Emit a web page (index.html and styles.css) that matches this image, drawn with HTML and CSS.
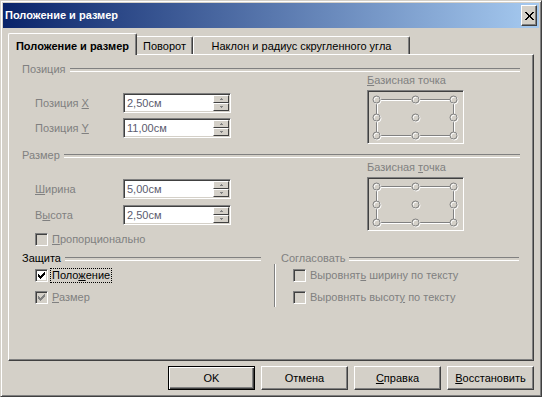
FILE: index.html
```html
<!DOCTYPE html>
<html lang="ru">
<head>
<meta charset="utf-8">
<title>Положение и размер</title>
<link rel="stylesheet" href="styles.css">
</head>
<body>
<div class="window">
  <div class="titlebar">
    <span class="title">Положение и размер</span>
    <span class="close"><svg width="9" height="8" viewBox="0 0 9 8" shape-rendering="crispEdges"><path fill="#000" d="M0 0h2v1h-2zM7 0h2v1h-2zM1 1h2v1h-2zM6 1h2v1h-2zM2 2h2v1h-2zM5 2h2v1h-2zM3 3h3v1h-3zM3 4h3v1h-3zM2 5h2v1h-2zM5 5h2v1h-2zM1 6h2v1h-2zM6 6h2v1h-2zM0 7h2v1h-2zM7 7h2v1h-2z"/></svg></span>
  </div>
  <div class="content">
    <div class="tabs">
      <div class="tab tab-active">Положение и размер</div>
      <div class="tab tab-rot">Поворот</div>
      <div class="tab tab-slant">Наклон и радиус скругленного угла</div>
    </div>
    <div class="panel">
      <div class="group-head"><span>Позиция</span></div>
      <div class="sec">
        <div class="fields">
          <div class="field-row"><span class="lbl">Позиция <u>X</u></span><div class="spin"><span class="val">2,50см</span><span class="spin-btns"><span class="sb"><svg width="3" height="2" viewBox="0 0 3 2" shape-rendering="crispEdges"><path fill="#808080" d="M1 0h1v1h-1zM0 1h3v1h-3z"/></svg></span><span class="sb"><svg width="3" height="2" viewBox="0 0 3 2" shape-rendering="crispEdges"><path fill="#808080" d="M0 0h3v1h-3zM1 1h1v1h-1z"/></svg></span></span></div></div>
          <div class="field-row"><span class="lbl">Позиция <u>Y</u></span><div class="spin"><span class="val">11,00см</span><span class="spin-btns"><span class="sb"><svg width="3" height="2" viewBox="0 0 3 2" shape-rendering="crispEdges"><path fill="#808080" d="M1 0h1v1h-1zM0 1h3v1h-3z"/></svg></span><span class="sb"><svg width="3" height="2" viewBox="0 0 3 2" shape-rendering="crispEdges"><path fill="#808080" d="M0 0h3v1h-3zM1 1h1v1h-1z"/></svg></span></span></div></div>
        </div>
        <div class="basis">
          <div class="basis-lbl"><u>Б</u>азисная точка</div>
          <div class="basis-box">
            <svg width="93" height="50" viewBox="0 0 93 50" shape-rendering="crispEdges">
              <g fill="#fff"><rect x="12" y="8" width="30" height="1"/><rect x="51" y="8" width="30" height="1"/><rect x="12" y="44" width="30" height="1"/><rect x="51" y="44" width="30" height="1"/><rect x="8" y="12" width="1" height="10"/><rect x="8" y="30" width="1" height="10"/><rect x="85" y="12" width="1" height="10"/><rect x="85" y="30" width="1" height="10"/></g>
              <g fill="#808080"><rect x="12" y="7" width="30" height="1"/><rect x="51" y="7" width="30" height="1"/><rect x="12" y="43" width="30" height="1"/><rect x="51" y="43" width="30" height="1"/><rect x="7" y="12" width="1" height="10"/><rect x="7" y="30" width="1" height="10"/><rect x="84" y="12" width="1" height="10"/><rect x="84" y="30" width="1" height="10"/></g>
              <g fill="none" stroke="#fff" stroke-width="1" shape-rendering="auto"><circle cx="8.5" cy="8.5" r="3.5"/><circle cx="47.5" cy="8.5" r="3.5"/><circle cx="85.5" cy="8.5" r="3.5"/><circle cx="8.5" cy="26.5" r="3.5"/><circle cx="47.5" cy="26.5" r="3.5"/><circle cx="85.5" cy="26.5" r="3.5"/><circle cx="8.5" cy="44.5" r="3.5"/><circle cx="47.5" cy="44.5" r="3.5"/><circle cx="85.5" cy="44.5" r="3.5"/></g>
              <g fill="none" stroke="#808080" stroke-width="1" shape-rendering="auto"><circle cx="7.5" cy="7.5" r="3.5"/><circle cx="46.5" cy="7.5" r="3.5"/><circle cx="84.5" cy="7.5" r="3.5"/><circle cx="7.5" cy="25.5" r="3.5"/><circle cx="46.5" cy="25.5" r="3.5"/><circle cx="84.5" cy="25.5" r="3.5"/><circle cx="7.5" cy="43.5" r="3.5"/><circle cx="46.5" cy="43.5" r="3.5"/><circle cx="84.5" cy="43.5" r="3.5"/></g>
            </svg>
          </div>
        </div>
      </div>

      <div class="group-head head2"><span>Размер</span></div>
      <div class="sec sec2">
        <div class="fields">
          <div class="field-row"><span class="lbl"><u>Ш</u>ирина</span><div class="spin"><span class="val">5,00см</span><span class="spin-btns"><span class="sb"><svg width="3" height="2" viewBox="0 0 3 2" shape-rendering="crispEdges"><path fill="#808080" d="M1 0h1v1h-1zM0 1h3v1h-3z"/></svg></span><span class="sb"><svg width="3" height="2" viewBox="0 0 3 2" shape-rendering="crispEdges"><path fill="#808080" d="M0 0h3v1h-3zM1 1h1v1h-1z"/></svg></span></span></div></div>
          <div class="field-row"><span class="lbl">В<u>ы</u>сота</span><div class="spin"><span class="val">2,50см</span><span class="spin-btns"><span class="sb"><svg width="3" height="2" viewBox="0 0 3 2" shape-rendering="crispEdges"><path fill="#808080" d="M1 0h1v1h-1zM0 1h3v1h-3z"/></svg></span><span class="sb"><svg width="3" height="2" viewBox="0 0 3 2" shape-rendering="crispEdges"><path fill="#808080" d="M0 0h3v1h-3zM1 1h1v1h-1z"/></svg></span></span></div></div>
          <div class="cb-row prop"><span class="cb dis"></span><span class="cb-lbl dim"><u>П</u>ропорционально</span></div>
        </div>
        <div class="basis basis2">
          <div class="basis-lbl">Базисная <u>т</u>очка</div>
          <div class="basis-box">
            <svg width="93" height="50" viewBox="0 0 93 50" shape-rendering="crispEdges">
              <g fill="#fff"><rect x="12" y="8" width="30" height="1"/><rect x="51" y="8" width="30" height="1"/><rect x="12" y="44" width="30" height="1"/><rect x="51" y="44" width="30" height="1"/><rect x="8" y="12" width="1" height="10"/><rect x="8" y="30" width="1" height="10"/><rect x="85" y="12" width="1" height="10"/><rect x="85" y="30" width="1" height="10"/></g>
              <g fill="#808080"><rect x="12" y="7" width="30" height="1"/><rect x="51" y="7" width="30" height="1"/><rect x="12" y="43" width="30" height="1"/><rect x="51" y="43" width="30" height="1"/><rect x="7" y="12" width="1" height="10"/><rect x="7" y="30" width="1" height="10"/><rect x="84" y="12" width="1" height="10"/><rect x="84" y="30" width="1" height="10"/></g>
              <g fill="none" stroke="#fff" stroke-width="1" shape-rendering="auto"><circle cx="8.5" cy="8.5" r="3.5"/><circle cx="47.5" cy="8.5" r="3.5"/><circle cx="85.5" cy="8.5" r="3.5"/><circle cx="8.5" cy="26.5" r="3.5"/><circle cx="47.5" cy="26.5" r="3.5"/><circle cx="85.5" cy="26.5" r="3.5"/><circle cx="8.5" cy="44.5" r="3.5"/><circle cx="47.5" cy="44.5" r="3.5"/><circle cx="85.5" cy="44.5" r="3.5"/></g>
              <g fill="none" stroke="#808080" stroke-width="1" shape-rendering="auto"><circle cx="7.5" cy="7.5" r="3.5"/><circle cx="46.5" cy="7.5" r="3.5"/><circle cx="84.5" cy="7.5" r="3.5"/><circle cx="7.5" cy="25.5" r="3.5"/><circle cx="46.5" cy="25.5" r="3.5"/><circle cx="84.5" cy="25.5" r="3.5"/><circle cx="7.5" cy="43.5" r="3.5"/><circle cx="46.5" cy="43.5" r="3.5"/><circle cx="84.5" cy="43.5" r="3.5"/></g>
            </svg>
          </div>
        </div>
      </div>

      <div class="bottom">
        <div class="prot">
          <div class="group-head active-head"><span>Защита</span></div>
          <div class="cb-row first"><span class="cb"><svg width="7" height="7" viewBox="0 0 7 7" shape-rendering="crispEdges"><path fill="#000" d="M6 0h1v1h-1zM5 1h2v1h-2zM0 2h1v1h-1zM4 2h3v1h-3zM0 3h2v1h-2zM3 3h3v1h-3zM0 4h5v1h-5zM1 5h3v1h-3zM2 6h1v1h-1z"/></svg></span><span class="cb-lbl focus">Поло<u>ж</u>ение</span></div>
          <div class="cb-row second"><span class="cb dis"><svg width="7" height="7" viewBox="0 0 7 7" shape-rendering="crispEdges"><path fill="#808080" d="M6 0h1v1h-1zM5 1h2v1h-2zM0 2h1v1h-1zM4 2h3v1h-3zM0 3h2v1h-2zM3 3h3v1h-3zM0 4h5v1h-5zM1 5h3v1h-3zM2 6h1v1h-1z"/></svg></span><span class="cb-lbl dim"><u>Р</u>азмер</span></div>
        </div>
        <div class="sep"></div>
        <div class="align">
          <div class="group-head"><span>Согласовать</span></div>
          <div class="cb-row first"><span class="cb dis"></span><span class="cb-lbl dim">Выровнят<u>ь</u> ширину по тексту</span></div>
          <div class="cb-row second"><span class="cb dis"></span><span class="cb-lbl dim">Выровнять высот<u>у</u> по тексту</span></div>
        </div>
      </div>
    </div>
    <div class="buttons">
      <div class="btn default">OK</div>
      <div class="btn">Отмена</div>
      <div class="btn"><span><u>С</u>правка</span></div>
      <div class="btn"><span><u>В</u>осстановить</span></div>
    </div>
  </div>
</div>
</body>
</html>
```

FILE: styles.css
```css
* { box-sizing: border-box; }
html, body { margin: 0; padding: 0; background: #d4d0c8; }
body {
  font-family: "Liberation Sans", Arial, sans-serif;
  font-size: 11px;
  line-height: 13px;
  color: #000;
}
u { text-decoration: underline; text-underline-offset: 1px; }

.window {
  width: 542px;
  height: 397px;
  background: #d4d0c8;
  border: 1px solid;
  border-color: #d4d0c8 #404040 #404040 #d4d0c8;
  box-shadow: inset 1px 1px #fff, inset -1px -1px #808080;
  padding: 2px;
  display: flex;
  flex-direction: column;
}

.titlebar {
  height: 25px;
  background: linear-gradient(to right, #0a246a, #a6caf0);
  display: flex;
  align-items: center;
  justify-content: space-between;
  padding: 0 2px;
}
.title { color: #fff; font-weight: bold; padding-left: 0; }
.close {
  width: 16px;
  height: 21px;
  background: #d4d0c8;
  border: 1px solid;
  border-color: #fff #404040 #404040 #fff;
  box-shadow: inset -1px -1px #808080;
  display: flex;
  align-items: center;
  justify-content: center;
}

.content {
  flex: 1;
  padding: 5px 5px 0 5px;
  display: flex;
  flex-direction: column;
}

.tabs {
  display: flex;
  align-items: flex-end;
  height: 21px;
}
.tab {
  height: 18px;
  background: #d4d0c8;
  border-top: 1px solid #fff;
  border-left: 1px solid #fff;
  border-right: 1px solid #404040;
  box-shadow: inset -1px 0 #808080;
  border-radius: 2px 2px 0 0;
  display: flex;
  justify-content: center;
  padding-top: 3px;
  white-space: nowrap;
}
.tab-active {
  width: 129px;
  height: 22px;
  margin-bottom: -1px;
  padding-top: 6px;
  font-weight: bold;
  position: relative;
  z-index: 2;
}
.tab-rot { width: 56px; border-left: none; border-top-left-radius: 0; }
.tab-slant { width: 217px; }

.panel {
  height: 307px;
  border: 1px solid;
  border-color: #fff #404040 #404040 #fff;
  box-shadow: inset -1px -1px #808080;
  padding: 8px 13px 0 13px;
}

.group-head {
  display: flex;
  align-items: center;
  height: 13px;
  color: #808080;
  white-space: nowrap;
}
.group-head::after {
  content: "";
  flex: 1;
  height: 2px;
  border-top: 1px solid #808080;
  border-bottom: 1px solid #fff;
  margin-left: 4px;
}
.active-head { color: #000; }
.head2 { margin-top: 5px; }

.sec { display: flex; }
.fields {
  width: 345px;
  padding-top: 17px;
  display: flex;
  flex-direction: column;
  gap: 5px;
}
.sec2 .fields { gap: 6px; }

.field-row {
  display: flex;
  align-items: center;
  height: 20px;
  padding-left: 13px;
}
.lbl { width: 88px; color: #808080; }

.spin {
  width: 108px;
  height: 20px;
  background: #fff;
  border: 1px solid;
  border-color: #808080 #fff #fff #808080;
  box-shadow: inset 1px 1px #404040, inset -1px -1px #d4d0c8;
  padding: 1px 1px 1px 3px;
  display: flex;
  align-items: center;
}
.val { color: #5b5b6e; flex: 1; }
.spin-btns {
  width: 16px;
  height: 16px;
  display: flex;
  flex-direction: column;
}
.sb {
  height: 8px;
  background: #d4d0c8;
  border: 1px solid;
  border-color: #fff #404040 #404040 #fff;
  display: flex;
  align-items: center;
  justify-content: center;
}

.basis { display: flex; flex-direction: column; }
.basis-lbl { line-height: 12px; margin-top: -2px; color: #808080; }
.basis2 .basis-lbl { margin-top: -1px; }
.basis-box {
  width: 97px;
  height: 54px;
  margin-top: 4px;
  border: 1px solid;
  border-color: #808080 #fff #fff #808080;
  box-shadow: inset 1px 1px #404040, inset -1px -1px #d4d0c8;
  padding: 1px;
}
.basis-box svg { display: block; }

.cb-row {
  display: flex;
  align-items: center;
  height: 15px;
  padding-left: 13px;
}
.prop { margin-top: 1px; }
.cb {
  width: 13px;
  height: 13px;
  flex: none;
  background: #fff;
  border: 1px solid;
  border-color: #808080 #fff #fff #808080;
  box-shadow: inset 1px 1px #404040, inset -1px -1px #d4d0c8;
  display: flex;
  align-items: center;
  justify-content: center;
}
.cb svg { display: block; }
.cb.dis { background: #d4d0c8; }
.cb-lbl {
  margin-left: 2px;
  border: 1px solid transparent;
  padding: 0 1px;
  line-height: 13px;
  white-space: nowrap;
}
.dim { color: #808080; }
.focus { border: 1px dotted #000; }

.bottom { display: flex; margin-top: 5px; }
.prot { width: 239px; }
.sep {
  width: 2px;
  height: 43px;
  margin-top: 12px;
  margin-left: 13px;
  border-left: 1px solid #808080;
  border-right: 1px solid #fff;
}
.align { width: 238px; margin-left: 5px; }
.align .cb-row { padding-left: 12px; }
.cb-row.first { margin-top: 3px; }
.cb-row.second { margin-top: 7px; }

.buttons {
  display: flex;
  justify-content: flex-end;
  gap: 6px;
  margin-top: 5px;
}
.btn {
  width: 87px;
  height: 24px;
  background: #d4d0c8;
  border: 1px solid;
  border-color: #fff #404040 #404040 #fff;
  box-shadow: inset -1px -1px #808080;
  display: flex;
  align-items: center;
  justify-content: center;
}
.btn.default {
  border-color: #000;
  box-shadow: inset 1px 1px #fff, inset -1px -1px #404040, inset -2px -2px #808080;
}
```
